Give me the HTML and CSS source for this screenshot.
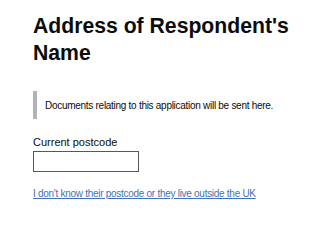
FILE: index.html
```html
<!DOCTYPE html>
<html lang="en">
<head>
<meta charset="utf-8">
<title>Address of Respondent's Name</title>
<link rel="stylesheet" href="styles.css">
</head>
<body>
<main class="page">
  <h1 class="title">Address of Respondent's Name</h1>
  <div class="inset">Documents relating to this application will be sent here.</div>
  <div class="field">
    <label class="label" for="postcode">Current postcode</label>
    <input class="input" id="postcode" type="text">
  </div>
  <a class="link" href="#">I don't know their postcode or they live outside the UK</a>
</main>
</body>
</html>
```
FILE: styles.css
```css
html, body {
  margin: 0;
  padding: 0;
  background: #ffffff;
}
body {
  font-family: "Liberation Sans", Arial, sans-serif;
  color: #0b0c0c;
}
.page {
  padding: 12px 0 0 33px;
  width: 290px;
}
.title {
  margin: 0;
  font-size: 21.2px;
  line-height: 27px;
  font-weight: 700;
}
.inset {
  margin-top: 25px;
  border-left: 4px solid #b1b4b6;
  padding: 8px 0 6px 8px;
  font-size: 10px;
  line-height: 14px;
  letter-spacing: -0.28px;
  color: #0b0c0c;
}
.field {
  margin-top: 16px;
  display: flex;
  flex-direction: column;
  align-items: flex-start;
}
.label {
  font-size: 11px;
  line-height: 15px;
  margin-bottom: 1px;
}
.input {
  box-sizing: border-box;
  width: 106px;
  height: 21px;
  margin: 0;
  border: 1px solid #505a5f;
  padding: 0 4px;
}
.link {
  display: inline-block;
  margin-top: 15px;
  font-size: 10px;
  line-height: 14px;
  letter-spacing: -0.28px;
  color: #3f72b8;
  text-decoration: underline;
}
```
